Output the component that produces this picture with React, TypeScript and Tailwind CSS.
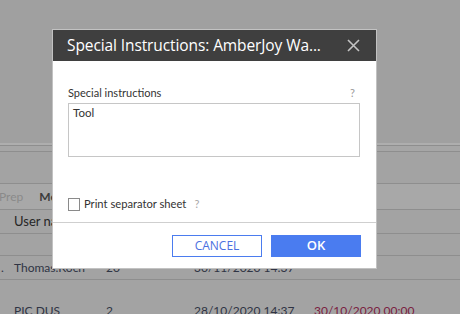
export default function App() {
  const font = { fontFamily: '"Open Sans", "Noto Sans", sans-serif' };
  const lato = { fontFamily: 'Lato, "Open Sans", sans-serif' };
  return (
    <div
      className="relative w-[460px] h-[314px] overflow-hidden bg-[#a3a3a3] text-[#2b2b2b]"
      style={font}
    >
      {/* page behind the overlay */}
      <div className="h-[143px] bg-[#a0a0a0]" />
      <div className="h-[2px] bg-[#aeaeae]" />
      <div className="h-[6px] border-t border-[#8e8e8e] bg-[#a6a6a6]" />
      <div className="h-[32px] border-t border-[#8e8e8e] bg-[#a3a3a3]" />
      <div className="h-[26px] border-t border-[#8e8e8e] bg-[#a8a8a8] flex items-center text-[12px]" style={lato}>
        <span className="text-[#8a8a8a] -ml-[1px]">Prep</span>
        <span className="ml-[16px] font-bold text-[#3c3c3c]">Mo</span>
      </div>
      <div className="h-[24px] border-t border-[#8e8e8e] flex items-center pl-[14px] text-[13px] text-[#262626]" style={lato}>
        User name
      </div>
      <div className="h-[22px] border-t border-[#8e8e8e]" />
      <div className="h-[24px] border-t border-[#8e8e8e] flex items-center text-[12px] text-[#2f3444]" style={lato}>
        <span className="w-[14px] pl-[1px]">.</span>
        <span className="w-[92px]">Thomas.Koch</span>
        <span className="w-[88px]">20</span>
        <span>30/11/2020 14:37</span>
      </div>
      <div className="h-[35px] border-t border-[#8e8e8e] flex items-start pt-[24px] text-[12px] leading-[14px] text-[#2f3444]" style={lato}>
        <span className="w-[14px]" />
        <span className="w-[92px]">PIC DUS</span>
        <span className="w-[88px]">2</span>
        <span className="w-[120px]">28/10/2020 14:37</span>
        <span className="text-[#7a2040]">30/10/2020 00:00</span>
      </div>

      {/* dialog */}
      <div className="absolute left-[52px] top-[29px] w-[325px] h-[240px] border border-[#c2c2c2] bg-white flex flex-col">
        <div className="h-[31px] bg-[#3f3f3f] flex items-center justify-between pl-[14px] pr-[16px]">
          <span className="text-white text-[15.5px] whitespace-nowrap tracking-[-0.1px]">
            Special Instructions: AmberJoy Wa...
          </span>
          <svg width="13" height="13" viewBox="0 0 13 13" className="shrink-0">
            <path d="M1 1L12 12M12 1L1 12" stroke="#c4c4c4" strokeWidth="1.6" />
          </svg>
        </div>
        <div className="flex-1 flex flex-col px-[15px] pt-[24px]" style={lato}>
          <div className="flex items-center justify-between text-[11px] text-[#333] h-[16px] pr-[6px]">
            <span>Special instructions</span>
            <span className="text-[#9a9a9a]">?</span>
          </div>
          <div className="mt-[2px] w-[292px] h-[54px] border border-[#c6c6c6] px-[4px] py-0 text-[11.5px] leading-[18px] text-[#333]">
            Tool
          </div>
          <div className="mt-[40px] flex items-center h-[14px]">
            <span className="w-[12px] h-[13px] border border-[#8a8a8a] bg-white" />
            <span className="ml-[4px] text-[11.2px] text-[#333]">Print separator sheet</span>
            <span className="ml-[8px] text-[11px] text-[#a8a8a8]">?</span>
          </div>
        </div>
        <div className="border-t border-[#cfcfcf] h-[46px] flex items-center justify-end gap-[9px] pr-[15px]">
          <button className="w-[90px] h-[22px] border border-[#4b7cef] bg-white text-[12px] text-[#4b6fe0]">
            CANCEL
          </button>
          <button className="w-[90px] h-[22px] bg-[#4a7cf0] text-[13px] text-white font-semibold">
            OK
          </button>
        </div>
      </div>
    </div>
  );
}
